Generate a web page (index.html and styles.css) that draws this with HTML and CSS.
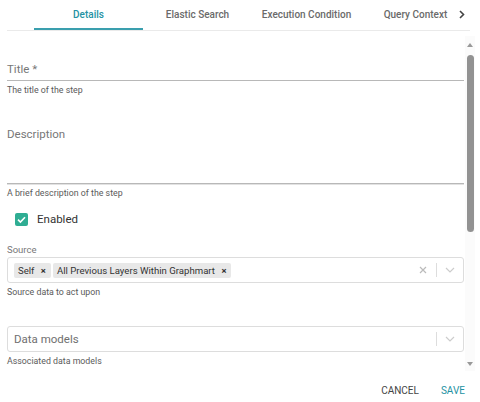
FILE: index.html
```html
<!DOCTYPE html>
<html>
<head>
<meta charset="utf-8">
<link rel="stylesheet" href="styles.css">
</head>
<body>
<div class="tabs">
  <div class="tab-prev"></div>
  <div class="tab-list">
    <div class="tab active">Details</div>
    <div class="tab">Elastic Search</div>
    <div class="tab">Execution Condition</div>
    <div class="tab">Query Context</div>
  </div>
  <div class="tab-next">
    <svg width="6" height="9" viewBox="0 0 6 9"><path d="M1 1 L4.5 4.5 L1 8" fill="none" stroke="#444" stroke-width="1.6"/></svg>
  </div>
</div>
<div class="body">
  <div class="form">
    <div class="line-field title-field"><span class="label">Title *</span></div>
    <div class="hint">The title of the step</div>
    <div class="line-field desc-field"><span class="label">Description</span></div>
    <div class="hint">A brief description of the step</div>
    <div class="check-row">
      <span class="checkbox"><svg width="13" height="13" viewBox="0 0 13 13"><path d="M3 6.7 L5.4 9 L10 4.2" fill="none" stroke="#fff" stroke-width="1.6"/></svg></span>
      <span class="check-label">Enabled</span>
    </div>
    <div class="small-label">Source</div>
    <div class="select">
      <div class="chips">
        <span class="chip">Self <b class="x">×</b></span>
        <span class="chip">All Previous Layers Within Graphmart <b class="x">×</b></span>
      </div>
      <div class="select-icons">
        <svg class="clear" width="8" height="8" viewBox="0 0 8 8"><path d="M1 1 L7 7 M7 1 L1 7" stroke="#bbb" stroke-width="1.2"/></svg>
        <span class="sep"></span>
        <svg class="chev" width="10" height="6" viewBox="0 0 10 6"><path d="M1 1 L5 5 L9 1" fill="none" stroke="#ccc" stroke-width="1.2"/></svg>
      </div>
    </div>
    <div class="hint">Source data to act upon</div>
    <div class="select models">
      <div class="placeholder">Data models</div>
      <div class="select-icons">
        <span class="sep"></span>
        <svg class="chev" width="10" height="6" viewBox="0 0 10 6"><path d="M1 1 L5 5 L9 1" fill="none" stroke="#ccc" stroke-width="1.2"/></svg>
      </div>
    </div>
    <div class="hint">Associated data models</div>
  </div>
  <div class="scrollbar">
    <div class="sb-up"><span class="tri-up"></span></div>
    <div class="sb-thumb"></div>
    <div class="sb-track"></div>
    <div class="sb-down"><span class="tri-down"></span></div>
  </div>
</div>
<div class="actions">
  <span class="btn">CANCEL</span>
  <span class="btn primary">SAVE</span>
</div>
</body>
</html>
```
FILE: styles.css
```css
* { box-sizing: border-box; }
html, body { margin: 0; padding: 0; background: #fff; }
body {
  width: 480px;
  height: 402px;
  overflow: hidden;
  font-family: Roboto, "Liberation Sans", sans-serif;
  color: #333;
}
.tabs {
  display: flex;
  height: 31px;
  margin: 0 10px 0 7px;
  border-bottom: 1px solid #eaeaea;
}
.tab-prev { width: 27px; flex: 0 0 27px; }
.tab-list {
  flex: 1;
  display: flex;
  overflow: hidden;
}
.tab {
  flex: 0 0 109px;
  height: 30px;
  display: flex;
  align-items: center;
  justify-content: center;
  font-size: 10px;
  font-weight: 500;
  color: #6a6a6a;
  white-space: nowrap;
  padding-bottom: 1px;
}
.tab.active {
  color: #2492a3;
  box-shadow: inset 0 -2px 0 #3a9fae;
}
.tab-next {
  flex: 0 0 16px;
  display: flex;
  align-items: center;
  justify-content: center;
  padding-bottom: 2px;
}
.body {
  display: flex;
  height: 335px;
  margin-top: 5px;
  margin-right: 5px;
  overflow: hidden;
}
.form {
  flex: 1;
  padding-left: 7px;
  padding-right: 1px;
}
.line-field {
  border-bottom: 1px solid #b8b8b8;
}
.label {
  display: block;
  font-size: 11.5px;
  line-height: 14px;
  color: #777;
}
.title-field { padding-top: 26px; padding-bottom: 4px; }
.desc-field {
  margin-top: 31px;
  padding-bottom: 42px;
  box-shadow: 0 1px 0 #e2e2e2;
}
.hint {
  margin-top: 3px;
  font-size: 8.8px;
  line-height: 12px;
  color: #5a5a5a;
}
.check-row {
  margin-top: 13px;
  padding-left: 8px;
  display: flex;
  align-items: center;
  height: 14px;
}
.checkbox {
  width: 13px;
  height: 13px;
  background: #2fad93;
  border-radius: 2px;
  display: flex;
}
.check-label {
  margin-left: 9px;
  font-size: 11.5px;
  color: #333;
}
.small-label {
  margin-top: 18px;
  font-size: 9.5px;
  line-height: 12px;
  color: #777;
}
.select {
  margin-top: 1px;
  height: 26px;
  border: 1px solid #ddd;
  border-radius: 3px;
  display: flex;
  align-items: center;
  padding-left: 6px;
}
.chips {
  flex: 1;
  display: flex;
  gap: 2px;
}
.chip {
  height: 15px;
  background: #e8e8e8;
  border-radius: 2px;
  font-size: 9.6px;
  line-height: 15px;
  padding: 0 5px 0 4px;
  color: #333;
  white-space: nowrap;
}
.chip .x {
  font-weight: 700;
  font-size: 9.5px;
  margin-left: 4px;
  color: #333;
}
.select-icons {
  display: flex;
  align-items: center;
  height: 100%;
}
.clear { margin-right: 9px; }
.sep {
  width: 1px;
  height: 14px;
  background: #ddd;
}
.chev { margin: 0 8px 0 8px; }
.models { margin-top: 28px; }
.placeholder {
  flex: 1;
  font-size: 11.5px;
  color: #707070;
}
.scrollbar {
  flex: 0 0 10px;
  display: flex;
  flex-direction: column;
  align-items: center;
  background: #fbfbfb;
}
.sb-up {
  height: 18px;
  display: flex;
  align-items: center;
  justify-content: center;
}
.tri-up {
  width: 0; height: 0;
  border-left: 3.5px solid transparent;
  border-right: 3.5px solid transparent;
  border-bottom: 4px solid #999;
}
.sb-thumb {
  margin-top: 1px;
  width: 7px;
  height: 177px;
  background: #929292;
  border-radius: 4px;
}
.sb-track { flex: 1; }
.sb-down {
  height: 14px;
  display: flex;
  align-items: center;
  justify-content: center;
}
.tri-down {
  width: 0; height: 0;
  border-left: 3.5px solid transparent;
  border-right: 3.5px solid transparent;
  border-top: 4px solid #999;
}
.actions {
  display: flex;
  justify-content: flex-end;
  gap: 22px;
  padding-right: 15px;
  margin-top: 13px;
}
.btn {
  font-size: 10px;
  line-height: 14px;
  color: #444;
  font-weight: 400;
}
.btn.primary { color: #2492a3; }
```
